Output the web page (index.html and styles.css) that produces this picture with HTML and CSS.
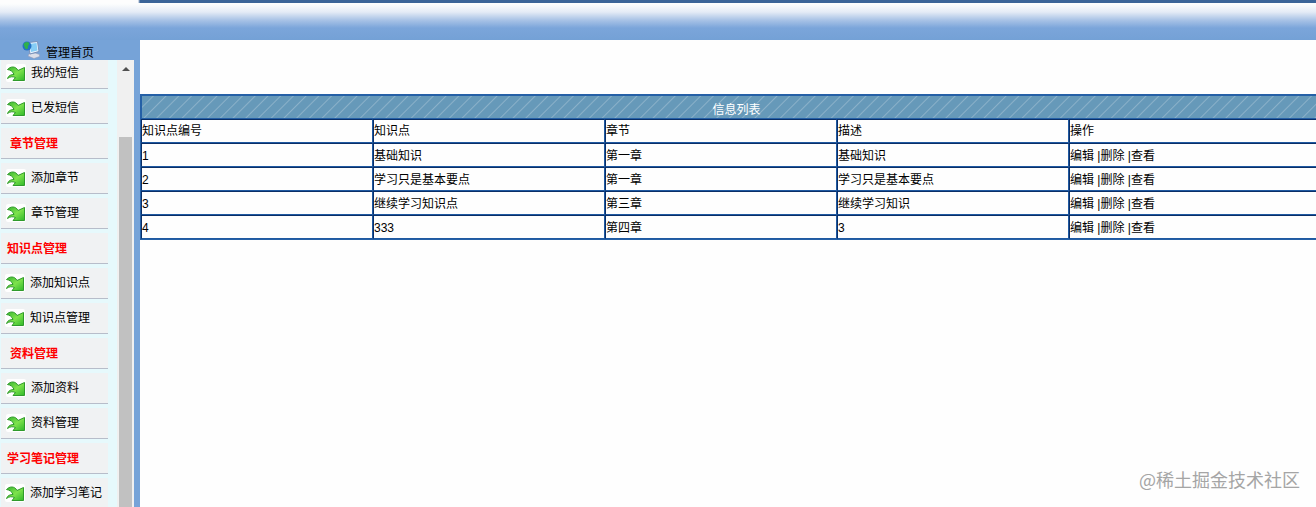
FILE: index.html
```html
<!DOCTYPE HTML>
<html lang="zh-CN">
<head>
<meta charset="utf-8">
<meta name="viewport" content="width=device-width,initial-scale=1.0">
<title>管理首页</title>
<link rel="stylesheet" href="styles.css">
</head>
<body>
	<!-- 公用图标 -->
	<svg class="defs" width="0" height="0">
		<defs>
			<linearGradient id="green" x1="0" y1="0" x2="1" y2="1">
				<stop offset="0" stop-color="#35b42f"/>
				<stop offset="0.5" stop-color="#7fe34c"/>
				<stop offset="1" stop-color="#2fb82a"/>
			</linearGradient>
			<symbol id="arrow" viewBox="0 0 20 18">
				<rect width="20" height="18" rx="2" fill="#fff"/>
				<path d="M1.500 5.500C4 2.500 9.500 1.500 12 6.500L18.500 3.500V16.500H7L9.500 13.500C6.500 12.300 4 12.500 1.500 14.500C2.500 11.300 5.500 10.500 8 10.500C7 7.500 4.500 6 1.500 5.500Z" fill="url(#green)" stroke="#2f9a2b" stroke-linejoin="round"/>
			</symbol>
		</defs>
	</svg>
	<header id="top"></header>
	<div id="wrap">
		<aside id="side">
			<a class="home" href="#">
				<svg width="20" height="20" viewBox="0 0 20 20">
					<path d="M7 14L13 13L17.500 14.500V16.500L12 18.500L6 16Z" fill="#dcdfe9" stroke="#9297b0" stroke-width="0.500"/>
					<path d="M6 2.500L15.500 1.500L17 11.500L8 14Z" fill="#e9f4ff" stroke="#7890b8"/>
					<path d="M7.500 4L14.500 3L15.500 10.500L9 12Z" fill="#86cdf5"/>
					<circle cx="5" cy="6" r="4.500" fill="#2472c4"/>
					<path d="M1.500 4.500C3 1.500 6 1.500 7 3C8 5 5.500 5 6 7.500C6 9.500 3.500 9.500 3 8Z" fill="#2fb04a"/>
				</svg>
				<span>管理首页</span>
			</a>
			<div class="menu">
				<ul>
					<li><a href="#"><svg><use href="#arrow"/></svg>我的短信</a></li>
					<li><a href="#"><svg><use href="#arrow"/></svg>已发短信</a></li>
					<li class="tit">章节管理</li>
					<li><a href="#"><svg><use href="#arrow"/></svg>添加章节</a></li>
					<li><a href="#"><svg><use href="#arrow"/></svg>章节管理</a></li>
					<li class="tit long">知识点管理</li>
					<li class="long"><a href="#"><svg><use href="#arrow"/></svg>添加知识点</a></li>
					<li class="long"><a href="#"><svg><use href="#arrow"/></svg>知识点管理</a></li>
					<li class="tit">资料管理</li>
					<li><a href="#"><svg><use href="#arrow"/></svg>添加资料</a></li>
					<li><a href="#"><svg><use href="#arrow"/></svg>资料管理</a></li>
					<li class="tit long">学习笔记管理</li>
					<li class="long"><a href="#"><svg><use href="#arrow"/></svg>添加学习笔记</a></li>
				</ul>
				<div class="bar"><i></i><b></b></div>
			</div>
		</aside>
		<main id="main">
			<table>
				<colgroup><col class="c"><col class="c"><col class="c"><col class="c"><col></colgroup>
				<thead>
					<tr><th class="caption" colspan="5">信息列表</th></tr>
					<tr><th>知识点编号</th><th>知识点</th><th>章节</th><th>描述</th><th>操作</th></tr>
				</thead>
				<tbody>
					<tr><td>1</td><td>基础知识</td><td>第一章</td><td>基础知识</td><td><a href="#">编辑</a> |<a href="#">删除</a> |<a href="#">查看</a></td></tr>
					<tr><td>2</td><td>学习只是基本要点</td><td>第一章</td><td>学习只是基本要点</td><td><a href="#">编辑</a> |<a href="#">删除</a> |<a href="#">查看</a></td></tr>
					<tr><td>3</td><td>继续学习知识点</td><td>第三章</td><td>继续学习知识</td><td><a href="#">编辑</a> |<a href="#">删除</a> |<a href="#">查看</a></td></tr>
					<tr><td>4</td><td>333</td><td>第四章</td><td>3</td><td><a href="#">编辑</a> |<a href="#">删除</a> |<a href="#">查看</a></td></tr>
				</tbody>
			</table>
		</main>
	</div>
	<div class="mark">@稀土掘金技术社区</div>
</body>
</html>
```
FILE: styles.css
```css
body { margin: 0; height: 100vh; overflow: hidden; display: flex; flex-direction: column; background: #76a3d8; color: #000; font: 12px/16px "Liberation Sans", "Noto Sans CJK SC", sans-serif; }
a { color: inherit; text-decoration: none; }
ul { margin: 0; padding: 0; list-style: none; }
.defs { position: absolute; }

/* 顶部 */
#top { height: 40px; flex: none; background: linear-gradient(90deg, #fdfdfd 138px, #3b6498 140px) 0 0 / 100% 3px no-repeat, linear-gradient(#fcfdfd 4px, #e4ebf6 12px, #a9c3e6 20px, #7ba5da 28px, #74a1d6 40px); }
#wrap { flex: 1; min-height: 0; display: flex; }

/* 左侧菜单 */
#side { width: 140px; flex: none; display: flex; flex-direction: column; }
.home { height: 20px; flex: none; display: flex; padding-left: 22px; gap: 4px; }
.home span { padding-top: 5px; }
.menu { flex: 1; min-height: 0; width: 134px; display: flex; overflow: hidden; background: #e6f9fc; }
.menu ul { width: 108px; margin-top: -6px; }
.menu li { box-sizing: border-box; height: 31px; margin: 0 0 4px 1px; border-bottom: 1px solid #b7bdca; padding-left: 5px; background: #f0f2f3; line-height: 30px; white-space: nowrap; }
.menu li:first-child { height: 35px; padding-top: 4px; }
.menu li a { display: flex; align-items: center; gap: 5px; }
.menu li svg { width: 20px; height: 18px; }
.menu li.long { padding-left: 4px; }
.menu li.tit { padding-left: 9px; color: #f00; font-weight: bold; line-height: 32px; }
.menu li.tit.long { padding-left: 6px; }
.bar { width: 17px; margin-left: auto; display: flex; flex-direction: column; align-items: center; background: #f0f0f0; }
.bar i { margin: 7px 0 66px; border: 4px solid transparent; border-top: 0; border-bottom-color: #505050; }
.bar b { flex: 1; width: 13px; background: #c1c1c1; }

/* 右侧列表，表格比窗口略宽 */
#main { flex: 1; min-width: 0; overflow: hidden; padding-top: 54px; background: #fefefe; }
table { width: calc(100% + 17px); table-layout: fixed; border: 1px solid #2560a6; border-spacing: 0; }
.c { width: 232px; }
th, td { box-sizing: border-box; height: 24px; padding: 0; border: 1px solid #1f59a1; border-top-color: #0a2f68; border-left-color: #0a2f68; text-align: left; font-weight: normal; }
td { padding-top: 2px; }
.caption { padding-top: 5px; border-color: #2560a6; text-align: center; color: #fff; background: repeating-linear-gradient(135deg, #6699b9 0, #6699b9 7px, #8bb1c9 8px, #6699b9 9px); }

.mark { position: absolute; right: 16px; bottom: 16px; font-family: "Noto Sans CJK SC", sans-serif; font-size: 18px; line-height: 24px; color: #a5a5a5; }
```
